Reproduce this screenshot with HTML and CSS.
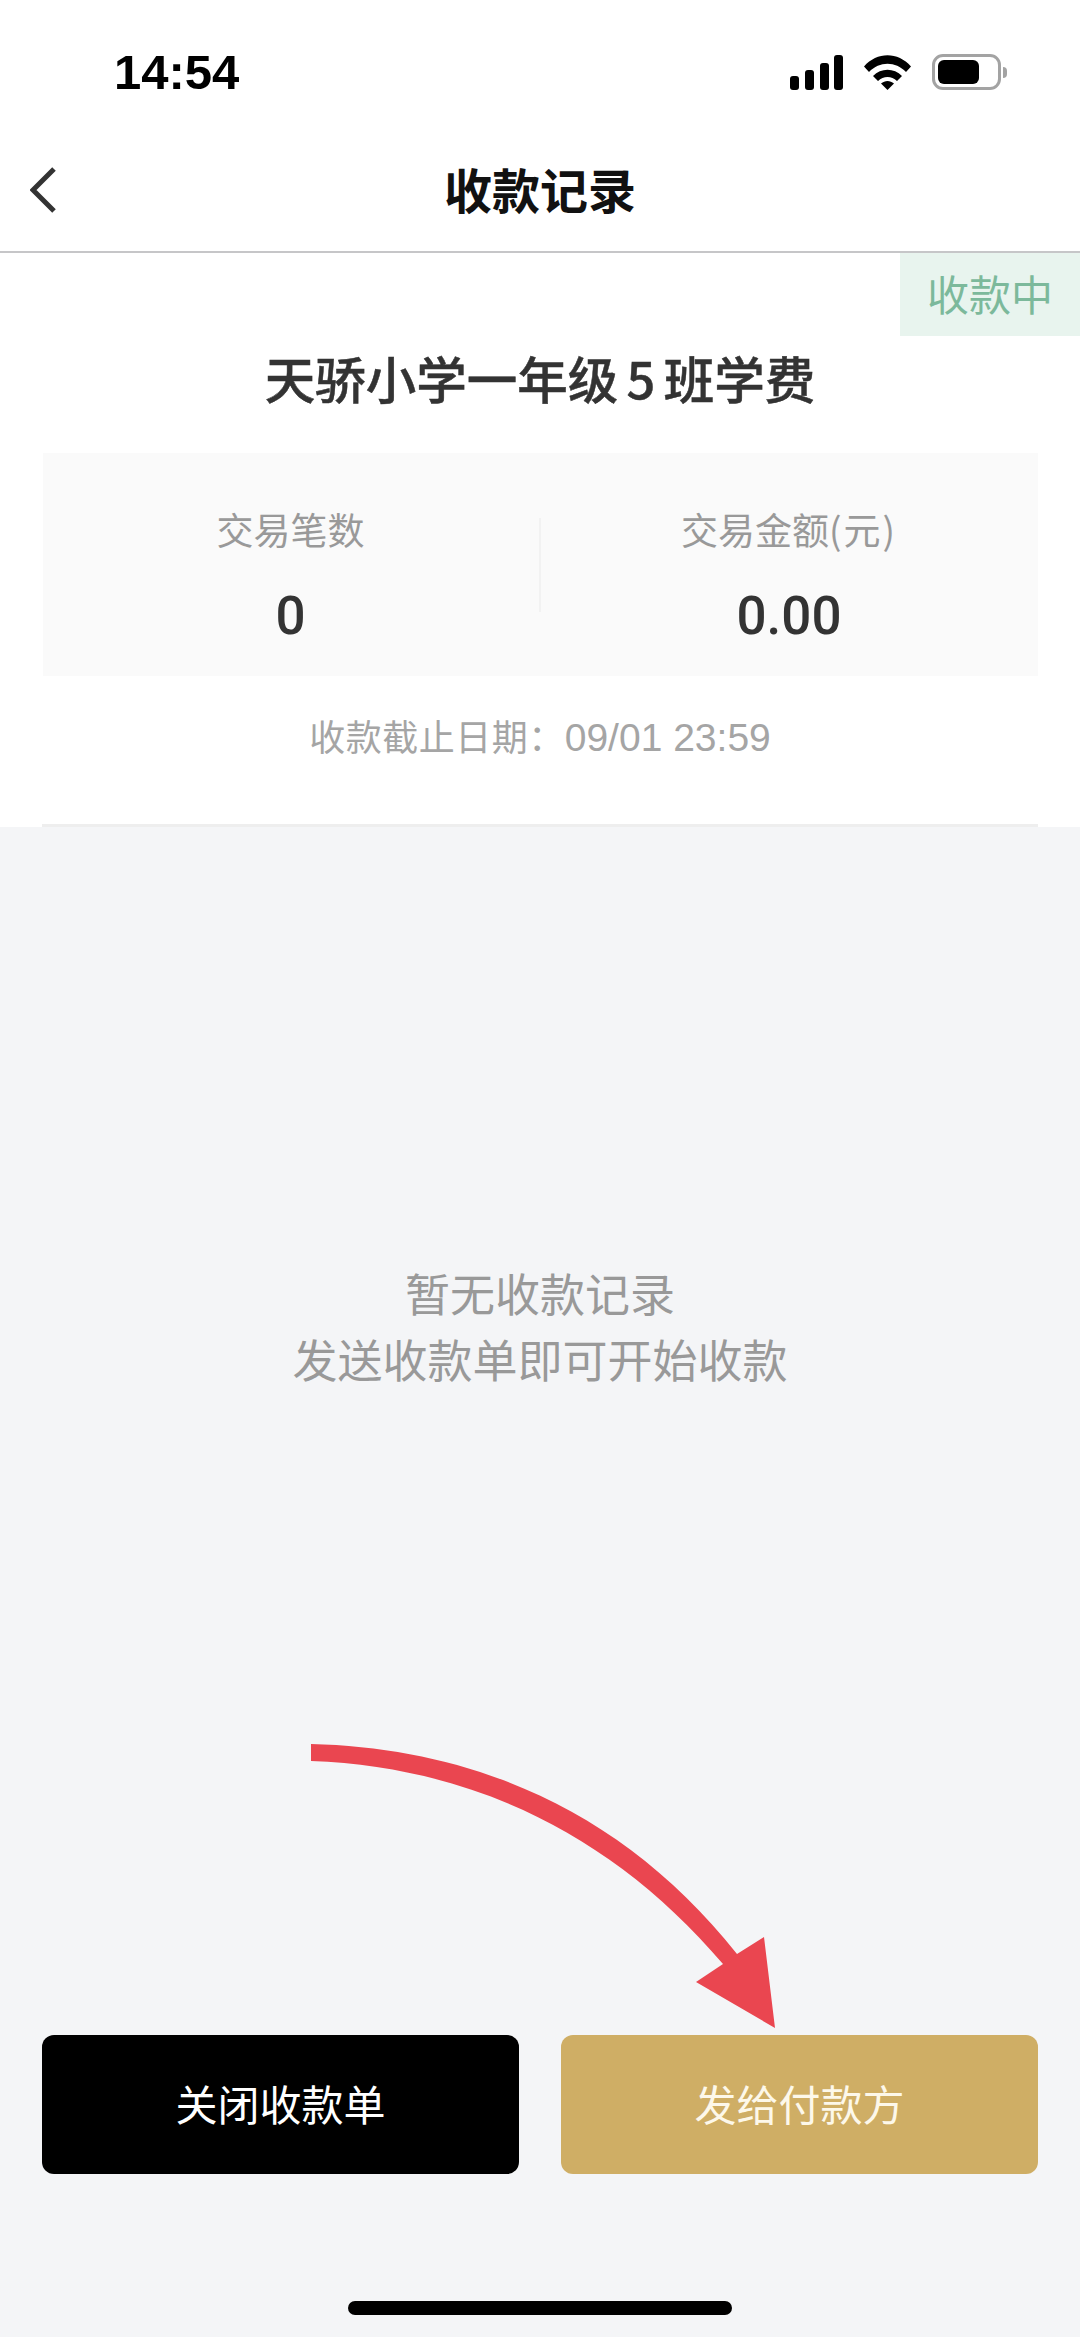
FILE: index.html
```html
<!DOCTYPE html>
<html lang="zh">
<head>
<meta charset="utf-8">
<title>收款记录</title>
<link rel="stylesheet" href="styles.css">
</head>
<body>
<div class="page">
  <div class="statusbar">
    <span class="time">14:54</span>
    <div class="status-icons">
      <svg class="signal" width="53" height="35" viewBox="0 0 53 35"><rect x="0" y="21" width="9" height="14" rx="3"/><rect x="15" y="15" width="9" height="20" rx="3"/><rect x="30" y="8" width="9" height="27" rx="3"/><rect x="44" y="0" width="9" height="35" rx="3"/></svg>
      <svg class="wifi" width="47" height="35" viewBox="0 0 47 35"><path d="M0 11.500 C13 -3.500 34 -3.500 47 11.500 L42 17 C31.500 6 15.500 6 5 17Z"/><path d="M9 21 C17 12.500 30 12.500 38 21 L33 26 C27.500 20.500 19.500 20.500 14 26Z"/><path d="M17 28.500 C21 25 26 25 30 28.500 L23.500 35Z"/></svg>
      <div class="battery"><div class="battery-body"><div class="battery-level"></div></div><div class="battery-nub"></div></div>
    </div>
  </div>
  <header class="navbar">
    <svg class="back" width="26" height="46" viewBox="0 0 26 46"><path d="M24 2 L3 23 L24 44"/></svg>
    <h1 class="nav-title">收款记录</h1>
  </header>
  <section class="card">
    <div class="badge">收款中</div>
    <h2 class="bill-title">天骄小学一年级 5 班学费</h2>
    <div class="stats">
      <div class="stat"><div class="stat-label">交易笔数</div><div class="stat-value">0</div></div>
      <div class="stat-divider"></div>
      <div class="stat"><div class="stat-label">交易金额<span class="unit">(元)</span></div><div class="stat-value">0.00</div></div>
    </div>
    <p class="deadline">收款截止日期：<span class="deadline-date">09/01 23:59</span></p>
    <div class="card-rule"></div>
  </section>
  <main class="empty">
    <p>暂无收款记录</p>
    <p>发送收款单即可开始收款</p>
  </main>
  <div class="actions">
    <button class="btn btn-dark">关闭收款单</button>
    <button class="btn btn-gold">发给付款方</button>
  </div>
  <div class="home-wrap"><div class="home-indicator"></div></div>
  <svg class="arrow" width="1080" height="2337" viewBox="0 0 1080 2337"><path d="M311 1744 C480 1748 628 1816 737 1954 L764 1937 L775 2028 L696 1982 L723 1964 C615 1837 475 1767 311 1761 Z"/></svg>
</div>
</body>
</html>
```
FILE: styles.css
```css
* { box-sizing: border-box; margin: 0; padding: 0; }
html, body { width: 1080px; height: 2337px; overflow: hidden; }
body { font-family: "Noto Sans CJK SC", "Noto Sans", sans-serif; background: #f4f5f7; }
.page { position: relative; width: 1080px; height: 2337px; display: flex; flex-direction: column; }
.statusbar { height: 144px; background: #fff; display: flex; justify-content: space-between; align-items: center; padding: 0 73px 0 114px; }
.time { font-family: "Liberation Sans", sans-serif; font-size: 49px; font-weight: 700; color: #000; line-height: 1; }
.status-icons { display: flex; align-items: center; gap: 21px; }
.signal, .wifi { fill: #000; display: block; }
.battery { display: flex; align-items: center; gap: 2px; }
.battery-body { width: 69px; height: 36px; border: 3px solid #a3a3a3; border-radius: 11px; padding: 3px; }
.battery-level { width: 41px; height: 100%; background: #000; border-radius: 6px; }
.battery-nub { width: 4px; height: 11px; background: #a3a3a3; border-radius: 0 4px 4px 0; }
.navbar { height: 109px; background: #fff; border-bottom: 2px solid #c6c6c8; display: flex; align-items: center; justify-content: center; position: relative; padding-bottom: 19px; }
.back { position: absolute; left: 30px; top: 23px; fill: none; stroke: #333; stroke-width: 5; }
.nav-title { font-size: 48px; font-weight: 700; color: #111; line-height: 1; }
.card { position: relative; height: 574px; background: #fff; padding: 0 42px; display: flex; flex-direction: column; align-items: center; }
.badge { position: absolute; top: 0; right: 0; width: 180px; height: 83px; background: #e8f4ee; color: #7cb99b; font-size: 42px; padding-bottom: 5px; display: flex; align-items: center; justify-content: center; }
.bill-title { margin-top: 94px; height: 60px; font-size: 50.500px; font-weight: 500; line-height: 60px; word-spacing: -3px; color: #333; white-space: nowrap; -webkit-text-stroke: 0.5px #333; }
.stats { margin-top: 46px; width: 995px; height: 223px; background: #fafafa; display: flex; align-items: center; padding-top: 15px; }
.stat { flex: 1; text-align: center; }
.stat:first-child { flex: 0 0 496px; }
.stat-label { font-size: 37px; line-height: 50px; color: #999; }
.unit { letter-spacing: 2px; }
.stat-value { margin-top: 37px; font-family: "Roboto", sans-serif; font-size: 53px; line-height: 50px; font-weight: 500; color: #333; }
.stat-divider { width: 2px; height: 94px; background: #f2f2f2; margin-top: -14px; }
.deadline { margin-top: 34px; font-size: 36px; letter-spacing: 0.5px; line-height: 50px; color: #a5a5a5; white-space: nowrap; }
.deadline-date { font-family: "Liberation Sans", sans-serif; font-size: 39px; letter-spacing: 0; }
.card-rule { position: absolute; left: 42px; right: 42px; bottom: 0; height: 3px; background: #eeeeee; }
.empty { flex: 1; display: flex; flex-direction: column; align-items: center; justify-content: center; font-size: 45px; line-height: 66px; color: #999; padding-bottom: 210px; }
.actions { display: flex; justify-content: space-between; padding: 0 42px 0 42px; height: 139px; gap: 42px; }
.btn { flex: 1; border: none; border-radius: 12px; font-family: inherit; font-size: 42px; color: #fff; padding-bottom: 4px; }
.btn-dark { background: #000; }
.btn-gold { background: #cfae65; color: #fdf8ea; }
.home-wrap { height: 163px; display: flex; justify-content: center; padding-top: 127px; }
.home-indicator { width: 384px; height: 14px; background: #000; border-radius: 7px; }
.arrow { position: absolute; left: 0; top: 0; pointer-events: none; fill: #ea4650; }
```
